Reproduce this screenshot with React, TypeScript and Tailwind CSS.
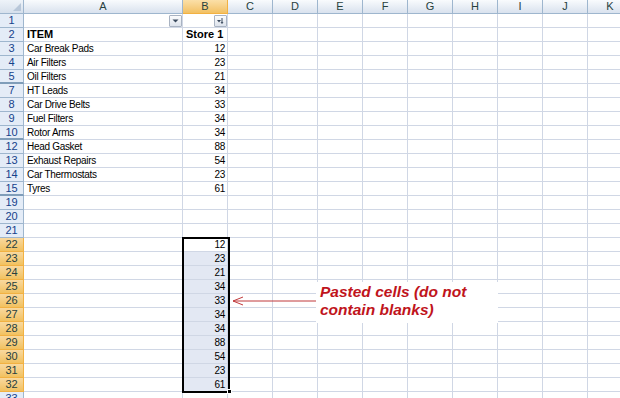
import React from 'react'

const cols = ['C', 'D', 'E', 'F', 'G', 'H', 'I', 'J', 'K']

type Row = { n: number; a?: string; b?: string; bold?: boolean; hiddenAfter?: boolean; sel?: boolean }

const rows: Row[] = [
    { n: 2, a: 'ITEM', b: 'Store 1', bold: true },
    { n: 3, a: 'Car Break Pads', b: '12' },
    { n: 4, a: 'Air Filters', b: '23' },
    { n: 5, a: 'Oil Filters', b: '21', hiddenAfter: true },
    { n: 7, a: 'HT Leads', b: '34' },
    { n: 8, a: 'Car Drive Belts', b: '33' },
    { n: 9, a: 'Fuel Filters', b: '34' },
    { n: 10, a: 'Rotor Arms', b: '34', hiddenAfter: true },
    { n: 12, a: 'Head Gasket', b: '88' },
    { n: 13, a: 'Exhaust Repairs', b: '54' },
    { n: 14, a: 'Car Thermostats', b: '23' },
    { n: 15, a: 'Tyres', b: '61', hiddenAfter: true },
    { n: 19 },
    { n: 20 },
    { n: 21 },
    ...['12', '23', '21', '34', '33', '34', '34', '88', '54', '23', '61'].map((v, i) => ({ n: 22 + i, b: v, sel: true })),
    { n: 33 },
]

function FilterButton({ applied }: { applied?: boolean }) {
    return (
        <div className="w-[13px] h-[12px] border border-[#a9b3c2] rounded-[1px] bg-gradient-to-b from-[#fbfcfd] to-[#dde3ec] flex items-center justify-center">
            {applied ? (
                <svg width="9" height="7" viewBox="0 0 9 7">
                    <path d="M1 3h4L3 5.5z" fill="#3b4a5e" />
                    <path d="M6 1v5M5 5l1 1.5L7 5" stroke="#3b4a5e" strokeWidth="1" fill="none" />
                </svg>
            ) : (
                <svg width="7" height="4" viewBox="0 0 7 4">
                    <path d="M0.5 0.5h6L3.5 3.5z" fill="#3b4a5e" />
                </svg>
            )}
        </div>
    )
}

export default function App() {
    return (
        <div className="relative w-[620px] h-[398px] overflow-hidden bg-white text-[11px] leading-[13px] text-black" style={{ fontFamily: '"Liberation Sans", Arial, sans-serif' }}>
            {/* column headers */}
            <div className="flex h-[14px]">
                <div className="w-[24px] shrink-0 border-r border-b border-[#9eb6ce] bg-gradient-to-b from-[#eef3f9] to-[#d6e0ec] relative">
                    <svg className="absolute right-[2px] bottom-[2px]" width="8" height="8" viewBox="0 0 8 8">
                        <path d="M8 0v8H0z" fill="#b8c7d9" />
                    </svg>
                </div>
                <div className="w-[159px] shrink-0 border-r border-b border-[#9eb6ce] bg-gradient-to-b from-[#f9fbfd] to-[#d9e2ee] flex items-center justify-center text-[#27413e]">A</div>
                <div className="w-[45px] shrink-0 border-r border-b border-[#f2b142] bg-gradient-to-b from-[#fbe0a8] to-[#f2c062] flex items-center justify-center text-[#27413e]">B</div>
                {cols.map((c) => (
                    <div key={c} className="w-[45px] shrink-0 border-r border-b border-[#9eb6ce] bg-gradient-to-b from-[#f9fbfd] to-[#d9e2ee] flex items-center justify-center text-[#27413e]">{c}</div>
                ))}
            </div>

            {/* row 1 with filter buttons */}
            <div className="flex h-[14px]">
                <div className="w-[24px] shrink-0 border-r border-b border-[#9eb6ce] bg-[#e4ecf7] flex items-center justify-center text-[#15428b]">1</div>
                <div className="w-[159px] shrink-0 border-r border-b border-[#d0d7e5] flex items-center justify-end">
                    <FilterButton />
                </div>
                <div className="w-[45px] shrink-0 border-r border-b border-[#d0d7e5] flex items-center justify-end">
                    <FilterButton applied />
                </div>
                {cols.map((c) => (
                    <div key={c} className="w-[45px] shrink-0 border-r border-b border-[#d0d7e5]" />
                ))}
            </div>

            {rows.map((r) => (
                <div key={r.n} className="flex h-[14px]">
                    <div
                        className={`w-[24px] shrink-0 border-r flex items-center justify-center ${r.sel ? 'bg-gradient-to-b from-[#f9d99f] to-[#f1c15f] border-[#f2b142] text-[#27413e]' : 'bg-[#e4ecf7] border-[#9eb6ce] text-[#15428b]'} ${r.hiddenAfter ? 'border-b-2 border-b-[#7f9db9]' : 'border-b'}`}
                    >
                        {r.n}
                    </div>
                    <div className={`w-[159px] shrink-0 border-r border-b border-[#d0d7e5] flex items-center pl-[3px] whitespace-nowrap ${r.bold ? 'font-bold text-[11px]' : 'text-[10px] tracking-[-0.3px]'}`}>
                        {r.a}
                    </div>
                    <div
                        className={`w-[45px] shrink-0 border-r border-b border-[#d0d7e5] flex items-center whitespace-nowrap ${r.bold ? 'font-bold text-[11px] pl-[3px]' : 'text-[10px] tracking-[-0.3px] justify-end pr-[2px]'} ${r.sel && r.n !== 22 ? 'bg-[#e3e8f3]' : ''}`}
                    >
                        {r.b}
                    </div>
                    {cols.map((c) => (
                        <div key={c} className="w-[45px] shrink-0 border-r border-b border-[#d0d7e5]" />
                    ))}
                </div>
            ))}

            {/* selection outline B22:B32 */}
            <div className="absolute left-[182px] top-[237px] w-[48px] h-[156px] border-2 border-black" />
            <div className="absolute left-[227px] top-[389px] w-[5px] h-[5px] bg-black border border-white" />

            {/* arrow */}
            <svg className="absolute left-[230px] top-[294px]" width="90" height="14" viewBox="0 0 90 14">
                <path d="M3 7H88" stroke="#c0393b" strokeWidth="1" />
                <path d="M13 3L3 7L13 11" stroke="#c0393b" strokeWidth="1" fill="none" />
            </svg>

            {/* annotation */}
            <div className="absolute left-[316px] top-[282px] w-[182px] h-[41px] bg-white pl-[4px] pt-[1px]">
                <p className="text-[15.5px] leading-[18px] font-bold italic text-[#c0141c]">
                    Pasted cells (do not
                    <br />
                    contain blanks)
                </p>
            </div>
        </div>
    )
}
